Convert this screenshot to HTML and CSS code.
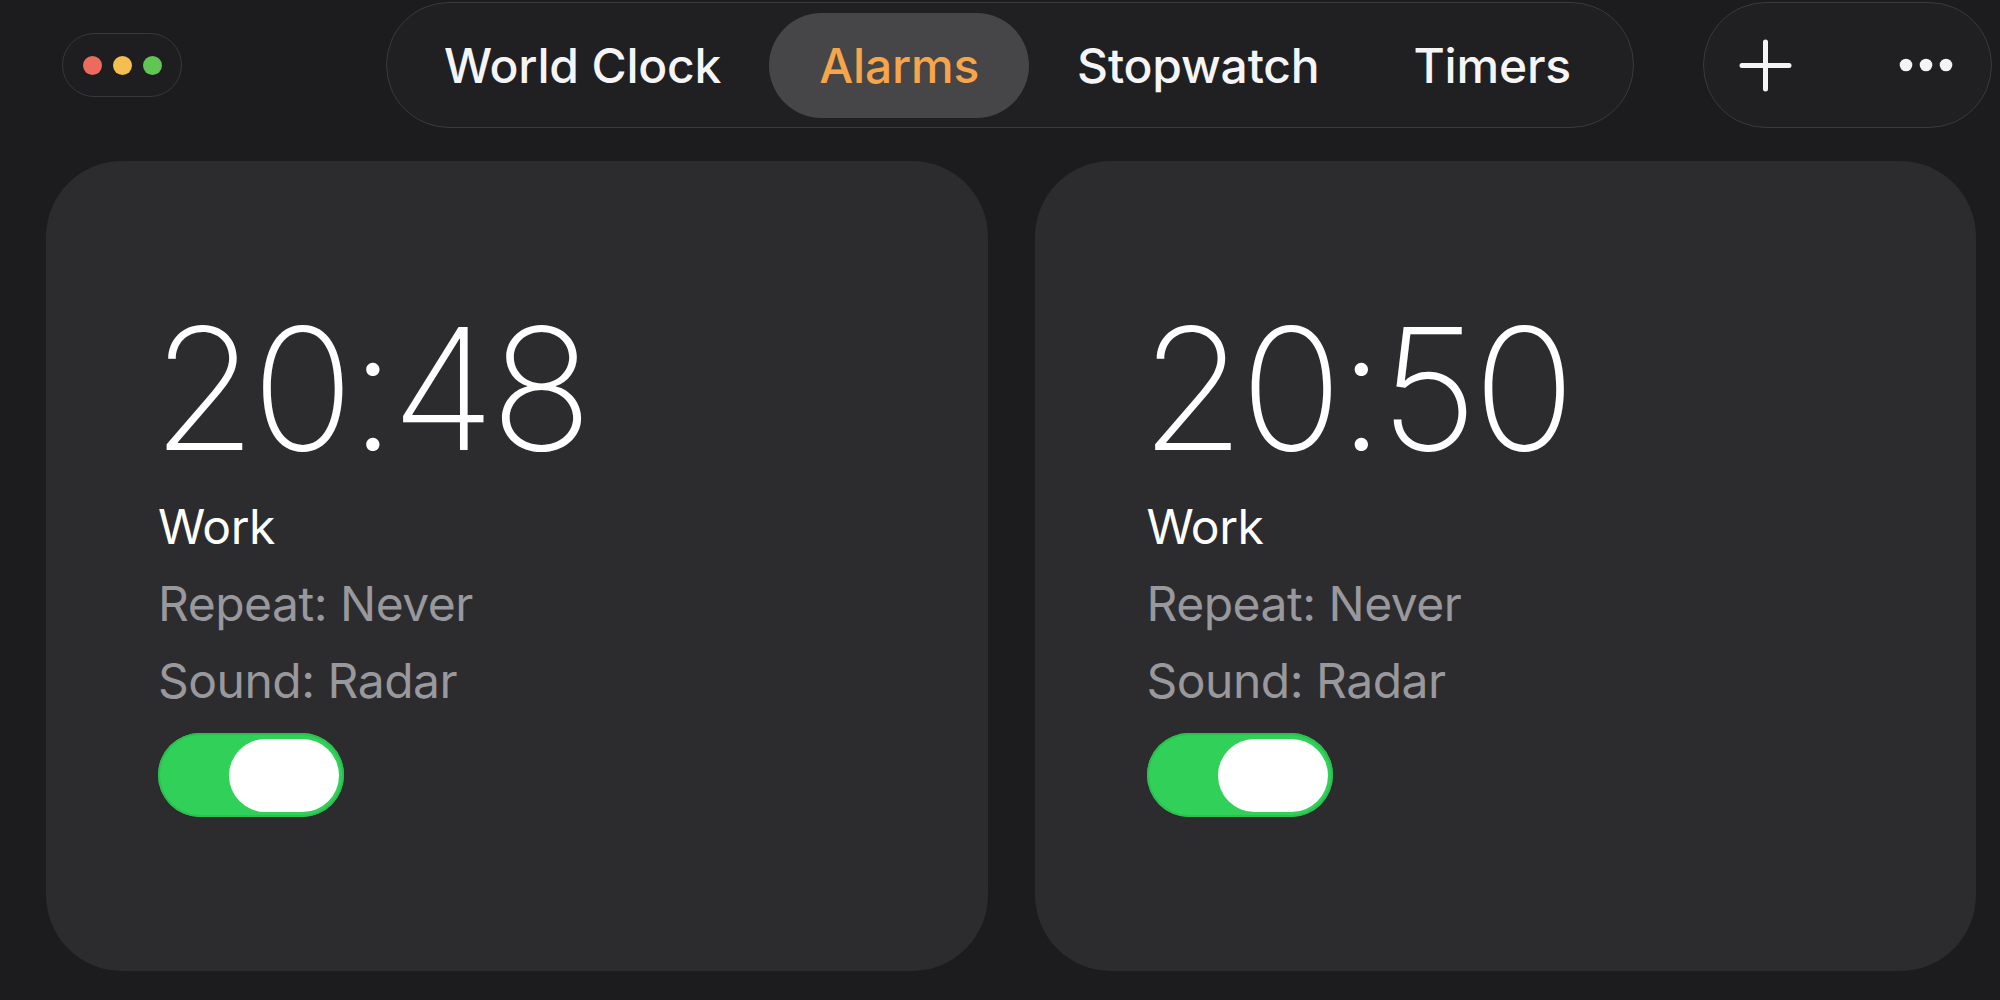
FILE: index.html
```html
<!DOCTYPE html>
<html lang="en">
<head>
<meta charset="utf-8">
<title>Clock – Alarms</title>
<link rel="stylesheet" href="styles.css">
</head>
<body>
<header class="header">
  <div class="traffic">
    <span class="dot dot-red"></span>
    <span class="dot dot-yellow"></span>
    <span class="dot dot-green"></span>
  </div>
  <nav class="tabs">
    <div class="tab">World Clock</div>
    <div class="tab tab-active">Alarms</div>
    <div class="tab">Stopwatch</div>
    <div class="tab">Timers</div>
  </nav>
  <div class="actions">
    <button class="action" aria-label="Add">
      <svg width="53" height="53" viewBox="0 0 53 53"><path d="M26.5 3v47M3 26.5h47" stroke="#f4f4f6" stroke-width="5" stroke-linecap="round" fill="none"/></svg>
    </button>
    <button class="action" aria-label="More">
      <svg width="54" height="14" viewBox="0 0 54 14"><circle cx="7" cy="7" r="6.3" fill="#f4f4f6"/><circle cx="27" cy="7" r="6.3" fill="#f4f4f6"/><circle cx="47" cy="7" r="6.3" fill="#f4f4f6"/></svg>
    </button>
  </div>
</header>
<main class="alarms">
  <section class="card">
    <div class="time">20:48</div>
    <div class="label">Work</div>
    <div class="meta">Repeat: Never</div>
    <div class="meta">Sound: Radar</div>
    <div class="toggle"><span class="knob"></span></div>
  </section>
  <section class="card">
    <div class="time">20:50</div>
    <div class="label">Work</div>
    <div class="meta">Repeat: Never</div>
    <div class="meta">Sound: Radar</div>
    <div class="toggle"><span class="knob"></span></div>
  </section>
</main>
</body>
</html>
```
FILE: styles.css
```css
* { box-sizing: border-box; }

html, body {
  margin: 0;
  padding: 0;
  background: #1c1c1e;
  width: 2000px;
  height: 1000px;
  overflow: hidden;
  font-family: "Inter", "Noto Sans", "Liberation Sans", sans-serif;
  color: #ffffff;
}

.header {
  display: flex;
  align-items: center;
  height: 128px;
  padding: 2px 0 0 62px;
}

.traffic {
  width: 120px;
  height: 64px;
  border-radius: 32px;
  border: 1.5px solid #38383b;
  background: #1e1e20;
  display: flex;
  align-items: center;
  justify-content: center;
  gap: 11px;
}

.dot {
  width: 19px;
  height: 19px;
  border-radius: 50%;
}
.dot-red { background: #ec6a5e; }
.dot-yellow { background: #f4bf4f; }
.dot-green { background: #61c554; }

.tabs {
  margin-left: 204px;
  width: 1248px;
  height: 126px;
  border-radius: 63px;
  border: 1.5px solid #3a3a3d;
  background: #202022;
  display: flex;
  align-items: center;
  padding: 0 11px;
  gap: 2px;
}

.tab {
  height: 105px;
  border-radius: 53px;
  padding: 0 46px;
  display: flex;
  align-items: center;
  font-size: 48px;
  font-weight: 500;
  color: #f5f5f7;
  letter-spacing: -0.2px;
  white-space: nowrap;
}

.tab-active {
  background: #464649;
  color: #f7a54b;
  padding: 0 50px;
}

.actions {
  margin-left: 69px;
  width: 289px;
  height: 126px;
  border-radius: 63px;
  border: 1.5px solid #3a3a3d;
  background: #202022;
  display: flex;
  align-items: center;
  justify-content: space-between;
  padding: 0 38px 0 35px;
}

.action {
  background: none;
  border: 0;
  padding: 0;
  display: flex;
  align-items: center;
  justify-content: center;
}

.alarms {
  display: grid;
  grid-template-columns: 1fr 1fr;
  gap: 47px;
  padding: 33px 24px 0 46px;
}

.card {
  height: 810px;
  background: #2c2c2e;
  border-radius: 76px;
  padding: 143px 0 0 112px;
  display: flex;
  flex-direction: column;
  align-items: flex-start;
}

.time {
  font-size: 169px;
  line-height: 1;
  font-weight: 170;
  letter-spacing: -4.5px;
  color: #ffffff;
  margin-left: -6px;
}

.label {
  margin-top: 15px;
  font-size: 48px;
  line-height: 77px;
  color: #ffffff;
  letter-spacing: -0.5px;
}

.meta {
  font-size: 48px;
  line-height: 77px;
  color: #98989d;
  letter-spacing: -0.5px;
}

.toggle {
  margin-top: 14px;
  width: 186px;
  height: 84px;
  border-radius: 42px;
  background: #31d159;
  box-shadow: inset 0 0 0 2px #2bc050;
  display: flex;
  align-items: center;
  justify-content: flex-end;
  padding-right: 5px;
}

.knob {
  width: 110px;
  height: 73px;
  border-radius: 37px;
  background: #ffffff;
}
```
